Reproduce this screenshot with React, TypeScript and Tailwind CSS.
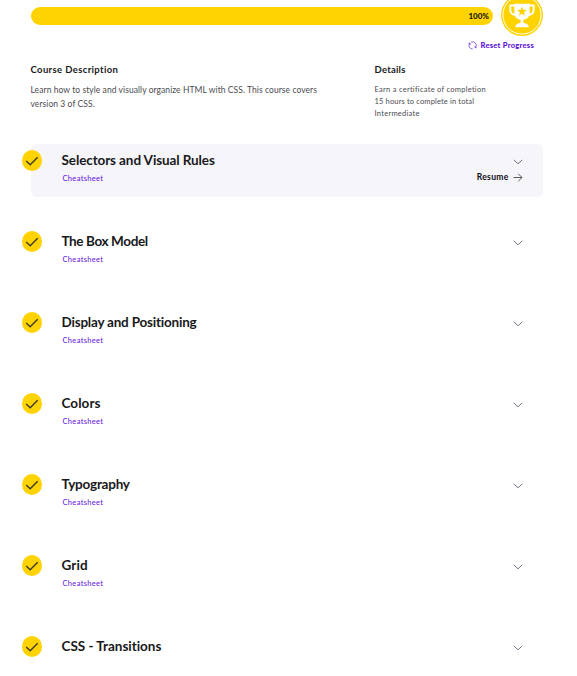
import React from 'react';

type Module = { title: string; spacing: string; active?: boolean; cheatsheet: boolean };

const modules: Module[] = [
  { title: 'Selectors and Visual Rules', spacing: 'tracking-[-0.1px]', active: true, cheatsheet: true },
  { title: 'The Box Model', spacing: 'tracking-[-0.38px]', cheatsheet: true },
  { title: 'Display and Positioning', spacing: 'tracking-[-0.21px]', cheatsheet: true },
  { title: 'Colors', spacing: 'tracking-[0.06px]', cheatsheet: true },
  { title: 'Typography', spacing: 'tracking-[-0.24px]', cheatsheet: true },
  { title: 'Grid', spacing: 'tracking-[0.1px]', cheatsheet: true },
  { title: 'CSS - Transitions', spacing: 'tracking-[-0.02px]', cheatsheet: false },
];

function CheckBadge() {
  return (
    <svg className="-ml-[9px] mt-[6px] h-[21px] w-5 shrink-0" viewBox="0 0 20 21" fill="none">
      <ellipse cx="10" cy="10.5" rx="10" ry="10.5" fill="#ffd300" />
      <path d="M4.2 11.1 8.2 14.8 15.7 7.300" stroke="#3d3b30" strokeWidth="1.4" />
    </svg>
  );
}

function Trophy() {
  return (
    <svg className="-mt-[6px] h-[42px] w-[42px] shrink-0" viewBox="0 0 42 42" fill="none">
      <circle cx="21" cy="21" r="21" fill="#ffd300" />
      <circle cx="21" cy="21" r="19.1" stroke="#fff" strokeWidth="1" />
      <path d="M14 11.500H9.300v4c0 3.400 2 5.500 6 5.500M28 11.500h4.700v4c0 3.400-2 5.500-6 5.500" stroke="#fff" strokeWidth="1.900" strokeLinejoin="round" />
      <path d="M13.300 9.700h15.400v9.300c0 4-2.800 6.200-6.300 6.700v3.200c2.900.2 5.200 1.400 5.500 4.300H14.100c.3-2.900 2.600-4.100 5.500-4.300v-3.200c-3.500-.5-6.300-2.700-6.300-6.700z" fill="#fff" />
      <path d="m21 12.500 1.300 3.300 3.500.2-2.700 2.200.9 3.500-3-1.900-3 1.900.9-3.500-2.700-2.200 3.500-.2z" fill="#ffd300" />
    </svg>
  );
}

function ResetIcon() {
  return (
    <svg className="mr-[4px] h-[9px] w-[9px]" viewBox="0 0 9 9" fill="none" stroke="#6a1fe0" strokeWidth=".7">
      <path d="M4.700 8A3.500 3.500 0 0 1 1.700 2.300M.5 2.300h1.700v1.500M3.200 1.200a3.500 3.500 0 0 1 4.300 5.300M8.700 6.700H7V5.200" />
    </svg>
  );
}

function ModuleRow({ title, spacing, active, cheatsheet }: Module) {
  return (
    <section className={`mb-7 flex h-[53px] w-[512px] rounded-[6px] ${active ? 'bg-[#f5f5fa]' : ''}`}>
      <CheckBadge />
      <div className="ml-[19.500px] flex-1">
        <h2 className={`mt-[7px] h-[18px] text-[13.500px] leading-[18px] font-bold whitespace-nowrap text-[#19191b] ${spacing}`}>{title}</h2>
        {cheatsheet && <a className="ml-[1px] mt-[3px] block text-[7.500px] leading-[13px] font-medium tracking-[0.320px] text-[#6a1fe0]">Cheatsheet</a>}
      </div>
      <div className="mr-[20px] flex w-[60px] flex-col items-end">
        <svg className="mt-[15px] h-[6px] w-[10px]" viewBox="0 0 10 6" fill="none" stroke="#65657a" strokeWidth=".9">
          <path d="M.8.900 5 4.800 9.200.9" />
        </svg>
        {active && (
          <a className="mt-[6px] flex h-[13px] items-center text-[8.500px] font-bold text-[#0b0b10]">
            <span className="tracking-[0.300px]">Resume</span>
            <svg className="mr-[0.500px] ml-[4px] h-[9px] w-[10px]" viewBox="0 0 10 9" fill="none" stroke="#333" strokeWidth=".8">
              <path d="M.5 4.500h8.500M5.300.8 9 4.500 5.300 8.200" />
            </svg>
          </a>
        )}
      </div>
    </section>
  );
}

export default function App() {
  return (
    <main className="h-[676px] w-[577px] overflow-hidden bg-white pl-[31px] font-['Lato',sans-serif]">
      <header className="flex h-9 items-start">
        <div className="mt-[7px] mr-[8px] flex h-[18px] w-[462px] items-center justify-end rounded-full bg-[#ffd300] pr-[4px] pb-px text-[8px] font-black text-[#15130a]">100%</div>
        <Trophy />
      </header>
      <div className="mt-[3px] flex h-[13px] w-[503px] items-center justify-end text-[7.500px] font-black tracking-[0.270px] text-[#5a0fd8]">
        <ResetIcon />
        <span>Reset Progress</span>
      </div>
      <div className="mt-[11px] flex h-[81px] text-[#4c4c50]">
        <div className="w-[344px]">
          <h3 className="-ml-[0.500px] text-[9.500px] leading-[14px] font-bold tracking-[0.370px] text-[#19191b]">Course Description</h3>
          <p className="-ml-[0.500px] mt-[6px] text-[8.500px] leading-[14px] tracking-[0.070px] whitespace-nowrap">Learn how to style and visually organize HTML with CSS. This course covers<br />version 3 of CSS.</p>
        </div>
        <div>
          <h3 className="-ml-[0.500px] text-[9.500px] leading-[14px] font-bold tracking-[0.220px] text-[#19191b]">Details</h3>
          <p className="-ml-[0.500px] mt-[7px] text-[7.500px] leading-[12px] tracking-[0.270px] whitespace-nowrap">Earn a certificate of completion<br /><span className="tracking-[0.150px]">15 hours to complete in total</span><br />Intermediate</p>
        </div>
      </div>
      {modules.map((module) => <ModuleRow key={module.title} {...module} />)}
    </main>
  );
}
